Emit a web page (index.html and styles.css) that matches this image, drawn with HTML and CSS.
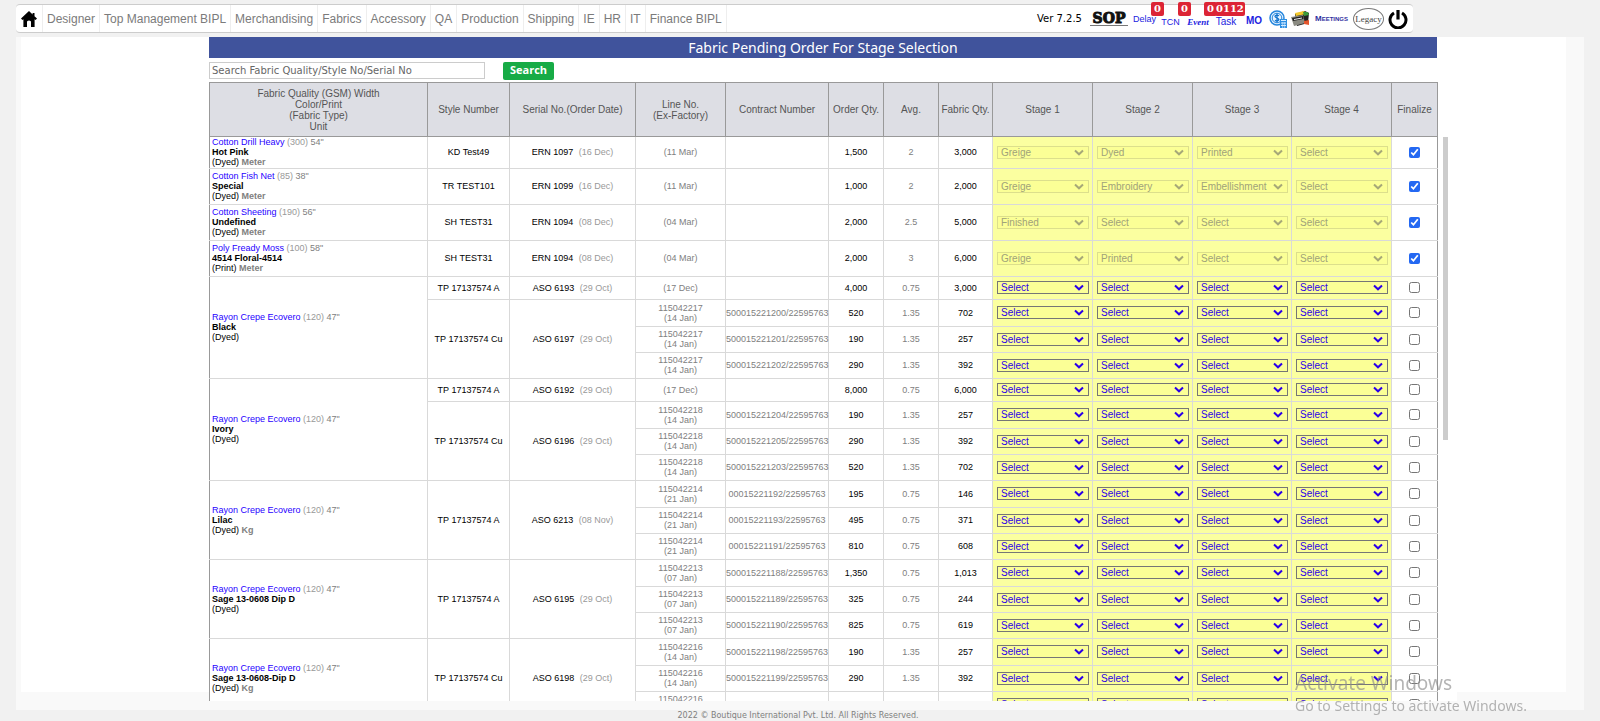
FILE: index.html
```html
<!DOCTYPE html>
<html lang="en">
<head>
<meta charset="utf-8">
<title>Fabric Pending Order For Stage Selection</title>
<link rel="stylesheet" href="styles.css">
</head>
<body>
<header class="topbar">
  <nav class="menu" aria-label="Main">
    <a href="#" class="home" aria-label="Home"><svg width="16" height="16" viewBox="0 0 16 16"><path d="M8 0 0 7.6 1.4 9 2.4 8.2V16H6V10.500Q8 8.500 10 10.500V16H13.600V8.200L14.600 9 16 7.600 13.500 5.200V2H11.600V3.400Z"/></svg></a>
    <a href="#">Designer</a>
    <a href="#">Top Management BIPL</a>
    <a href="#">Merchandising</a>
    <a href="#">Fabrics</a>
    <a href="#">Accessory</a>
    <a href="#">QA</a>
    <a href="#">Production</a>
    <a href="#">Shipping</a>
    <a href="#">IE</a>
    <a href="#">HR</a>
    <a href="#">IT</a>
    <a href="#">Finance BIPL</a>
  </nav>
  <div class="tools">
    <span class="version">Ver 7.2.5</span>
    <a href="#" class="tool sop"><span>SOP</span></a>
    <a href="#" class="tool delay">Delay<span class="badge">0</span></a>
    <a href="#" class="tool tcn">TCN<span class="badge">0</span></a>
    <a href="#" class="tool event">Event<span class="badge">0</span></a>
    <a href="#" class="tool task">Task<span class="badge">0112</span></a>
    <a href="#" class="tool mo">MO</a>
    <a href="#" class="tool costing" aria-label="Costing"><svg width="19" height="18" viewBox="0 0 19 18"><circle cx="8" cy="8" r="7" fill="#e6f3ff" stroke="#2586dc" stroke-width="1.500"/><circle cx="8" cy="8" r="4.800" fill="none" stroke="#2586dc"/><path d="M10 5.800Q8 4.500 6.500 5.600T8 8 9.300 10.400 6 10.200M8 3.600V12.400" fill="none" stroke="#1173cc" stroke-width="1.300"/><rect x="11" y="9" width="7" height="9" fill="#2d8fe2"/><path d="M12 10.500H17M12 13H17M12 15.500H17" stroke="#d8edff"/><path d="M13.700 12V18M15.700 12V18" stroke="#d8edff" stroke-width=".6"/></svg></a>
    <a href="#" class="tool ledger" aria-label="Ledger"><svg width="19" height="16" viewBox="0 0 19 16"><path d="M4 3 14 0 18 2 17 12 6 15Z" fill="#222"/><path d="M4 2 13 0 15 3 5 5Z" fill="#f5c92b"/><path d="M12 1 17 1 18 4 13 5Z" fill="#3c9a3b"/><path d="M0 6 12 4 14 12 3 15Z" fill="#8b8b82"/><path d="M1 7 12 5 12.500 8 2 10Z" fill="#222"/><path d="M3 8.500 11 7" stroke="#eee"/><path d="M13 10 18 9V14L13 13Z" fill="#e3562d"/></svg></a>
    <a href="#" class="tool meetings">Meetings</a>
    <a href="#" class="tool legacy"><span>Legacy</span></a>
    <button type="button" class="tool power" aria-label="Log out"><svg width="20" height="20" viewBox="0 0 20 20"><path d="M6 4A8 8 0 1 0 14 4" fill="none" stroke="#000" stroke-width="3"/><path d="M10 1V10.500" stroke="#000" stroke-width="3.200"/></svg></button>
  </div>
</header>

<main class="content">
  <div class="sheet">
    <section class="module">
      <h1>Fabric Pending Order For Stage Selection</h1>
      <form class="search">
        <input type="text" aria-label="Search orders" placeholder="Search Fabric Quality/Style No/Serial No">
        <button type="button">Search</button>
      </form>
      <table class="grid grid-head">
        <colgroup><col class="c-fabric"><col class="c-style"><col class="c-serial"><col class="c-line"><col class="c-contract"><col class="c-qty"><col class="c-qty"><col class="c-total"><col class="c-stage"><col class="c-stage"><col class="c-stage3"><col class="c-stage"><col class="c-final"></colgroup>
        <thead>
          <tr>
            <th>Fabric Quality (GSM) Width<br>Color/Print<br>(Fabric Type)<br>Unit</th>
            <th>Style Number</th>
            <th>Serial No.(Order Date)</th>
            <th>Line No.<br>(Ex-Factory)</th>
            <th>Contract Number</th>
            <th>Order Qty.</th>
            <th>Avg.</th>
            <th>Fabric Qty.</th>
            <th>Stage 1</th>
            <th>Stage 2</th>
            <th>Stage 3</th>
            <th>Stage 4</th>
            <th>Finalize</th>
          </tr>
        </thead>
      </table>
      <div class="scroller">
        <div class="viewport">
          <table class="grid grid-body" aria-label="Pending fabric orders">
            <colgroup><col class="c-fabric"><col class="c-style"><col class="c-serial"><col class="c-line"><col class="c-contract"><col class="c-qty"><col class="c-qty"><col class="c-total"><col class="c-stage"><col class="c-stage"><col class="c-stage3"><col class="c-stage"><col class="c-final"></colgroup>
            <tbody id="orders"></tbody>
          </table>
        </div>
        <div class="thumb"></div>
      </div>
    </section>
  </div>
</main>
<footer class="footer">2022 © Boutique International Pvt. Ltd. All Rights Reserved.</footer>
<aside class="watermark"><strong>Activate Windows</strong><span>Go to Settings to activate Windows.</span></aside>
<script src="orders.js"></script>
</body>
</html>
```

FILE: styles.css
```css
* { box-sizing: border-box; }

body {
  margin: 0;
  height: 100vh;
  overflow: hidden;
  background: #f1f1f1;
  font-family: "Liberation Sans", Arial, sans-serif;
}

a { text-decoration: none; }

/* Top bar */
.topbar {
  display: flex;
  justify-content: space-between;
  height: 29px;
  margin: 4px 187px 4px 16px;
  background: #fff;
  border: 1px solid #ccc;
  border-width: 1px 0;
  border-radius: 4px;
}

.menu { display: flex; }

.menu a {
  display: flex;
  align-items: center;
  padding: 0 4px;
  border-right: 1px solid #eee;
  color: #7b7b7b;
  font-size: 12px;
}

.menu .home { padding: 0 5px; }

.tools {
  display: flex;
  align-items: center;
  padding-right: 3px;
}

.version {
  width: 49px;
  font: 10px "DejaVu Sans", Verdana, sans-serif;
  white-space: nowrap;
}

.tool {
  position: relative;
  display: flex;
  align-items: center;
  justify-content: center;
  height: 27px;
  padding: 0;
  border: 0;
  background: none;
  color: #2222e0;
  font: 10px "Liberation Sans", Arial, sans-serif;
}

.sop { width: 46px; }
.sop span {
  padding: 0 3px;
  border-bottom: 1px solid #777;
  color: #111;
  font: bold 14px/13px "DejaVu Serif", serif;
  -webkit-text-stroke: 1px #111;
}
.delay { width: 25px; font-size: 9px; }
.tcn { width: 27px; padding-top: 6px; font-size: 9px; }
.event { width: 28px; padding-top: 6px; font: italic bold 9px "Liberation Serif", serif; }
.task { width: 28px; padding-top: 6px; }
.mo { width: 28px; padding-top: 4px; font-size: 10px; font-weight: bold; }
.costing { width: 21px; }
.ledger { width: 22px; }
.meetings { width: 41px; font: bold 8px "Liberation Sans", sans-serif; font-variant: small-caps; color: #3030a0; }
.legacy { width: 33px; }
.legacy span {
  width: 31px;
  border: 1px solid #777;
  border-radius: 50%;
  color: #444;
  font: 9px/20px "Liberation Serif", serif;
  text-align: center;
}
.power { width: 25px; }

.badge {
  position: absolute;
  top: -3px;
  left: 19px;
  padding: 0 3px;
  border-radius: 2px;
  background: #dc2435;
  color: #fff;
  font: bold 10px/14px "DejaVu Serif", serif;
}
.tcn .badge { left: 21px; }
.event .badge { left: 20px; }
.task .badge { left: 3px; padding: 0 1px; }

/* Page body */
.content {
  height: calc(100vh - 48px);
  margin: 0 16px;
  padding: 0 18px 0 5px;
  background: #f9f9f9;
}

.sheet {
  height: calc(100vh - 66px);
  padding: 0 109px 0 188px;
  background: #fff;
}

.module { background: #fff; }

h1 {
  margin: 0 20px 0 0;
  background: #40539c;
  color: #fff;
  font: 14px/21px "Noto Sans", "Open Sans", sans-serif;
  text-align: center;
}

.search {
  display: flex;
  gap: 18px;
  padding: 4px 0 2px;
}

.search input {
  width: 276px;
  height: 17px;
  padding: 0 2px;
  border: 1px solid #ccc;
  font: 10px "DejaVu Sans", Verdana, sans-serif;
}

.search input::placeholder { color: #666; }

.search button {
  width: 51px;
  height: 18px;
  padding: 0 0 2px;
  border: 0;
  border-radius: 2px;
  background: #17ab46;
  color: #fff;
  font: bold 11px/16px "Open Sans", sans-serif;
}

/* Order grid */
.grid {
  width: 100%;
  border-collapse: collapse;
  table-layout: fixed;
}

.c-fabric { width: 218px; }
.c-style { width: 82px; }
.c-serial { width: 126px; }
.c-line { width: 90px; }
.c-contract { width: 103px; }
.c-qty { width: 55px; }
.c-total { width: 54px; }
.c-stage { width: 100px; }
.c-stage3 { width: 99px; }
.c-final { width: 46px; }

.grid-head { width: calc(100% - 19px); }

.grid th {
  height: 54px;
  padding: 0;
  border: 1px solid #999;
  background: #dddee4;
  color: #555;
  font-size: 10px;
  font-weight: normal;
  line-height: 11px;
}

.scroller {
  display: flex;
  gap: 5px;
  margin-right: 9px;
  background: #fff;
}

.viewport {
  flex: 1;
  height: calc(100vh - 157px);
  overflow: hidden;
}

.thumb {
  width: 5px;
  height: 303px;
  background: #ccc;
}

.grid-body {
  border: 1px solid #999;
  border-top: 0;
}

.grid td {
  padding: 0;
  border: 1px solid #d9d9d9;
  border-top: 0;
  color: #808080;
  font-size: 9px;
  line-height: 10px;
  text-align: center;
  white-space: nowrap;
}

.grid td:first-child.fabric { border-left-color: #999; }
.grid td:last-child { border-right-color: #999; }

.grid tr.first { height: 31px; }
.grid tr.single { height: 36px; }
.grid tr.short { height: 23px; }
.grid tr.lead { height: 27px; }
.grid tr.next { height: 26px; }

.grid td.fabric {
  padding-left: 2px;
  text-align: left;
}

.fabric a { color: #1f00ff; }
.fabric .gsm { color: #999; }
.fabric .type, .fabric .color, .grid td.dark, .serial { color: #000; }
.serial { margin-right: 3px; }
.date { color: #999; }
.grid td.qty { font-weight: normal; color: #000; }
.grid td.stage { background: #fbffa0; }

.stage select {
  display: block;
  appearance: none;
  width: calc(100% - 7px);
  height: 13px;
  margin: 0 3px 0 4px;
  padding: 0 16px 0 3px;
  border: 1px solid #767676;
  border-radius: 0;
  background: #fbff96 url("data:image/svg+xml,%3Csvg xmlns='http://www.w3.org/2000/svg' width='10' height='7'%3E%3Cpath d='M1 1.500 5 5.300 9 1.500' fill='none' stroke='%232b00e8' stroke-width='2'/%3E%3C/svg%3E") no-repeat right 4px top 2px;
  color: #2b00e8;
  font: 10px/11px "Liberation Sans", Arial, sans-serif;
}

.stage select:disabled {
  border-color: #dcdf8c;
  background-image: url("data:image/svg+xml,%3Csvg xmlns='http://www.w3.org/2000/svg' width='10' height='7'%3E%3Cpath d='M1 1.500 5 5.300 9 1.500' fill='none' stroke='%23a6a878' stroke-width='2'/%3E%3C/svg%3E");
  color: #a0a27a;
  opacity: 1;
}

.grid input {
  display: block;
  width: 11px;
  height: 11px;
  margin: 0 auto;
  accent-color: #2468f2;
}

.footer {
  padding-right: 4px;
  color: #808080;
  font: 8px/11px "DejaVu Sans", Verdana, sans-serif;
  text-align: center;
}

.watermark {
  position: fixed;
  right: 68px;
  bottom: 6px;
  display: flex;
  flex-direction: column;
  width: 237px;
  color: rgba(140, 140, 140, .65);
  font: 14px/19px "Noto Sans", "Open Sans", sans-serif;
  white-space: nowrap;
  pointer-events: none;
}

.watermark strong {
  font-size: 19px;
  font-weight: normal;
  line-height: 25px;
}
```

FILE: orders.js
```js
// Each fabric holds style orders; each order holds its delivery lines:
// [line no, ex-factory, contract, order qty, avg, fabric qty]
const fabrics = [
  { name: 'Cotton Drill Heavy', gsm: 300, width: 54, color: 'Hot Pink', type: 'Dyed', unit: 'Meter', stages: ['Greige', 'Dyed', 'Printed', 'Select'],
    orders: [{ style: 'KD Test49', serial: 'ERN 1097', date: '16 Dec', lines: [['', '11 Mar', '', '1,500', '2', '3,000']] }] },
  { name: 'Cotton Fish Net', gsm: 85, width: 38, color: 'Special', type: 'Dyed', unit: 'Meter', stages: ['Greige', 'Embroidery', 'Embellishment', 'Select'],
    orders: [{ style: 'TR TEST101', serial: 'ERN 1099', date: '16 Dec', lines: [['', '11 Mar', '', '1,000', '2', '2,000']] }] },
  { name: 'Cotton Sheeting', gsm: 190, width: 56, color: 'Undefined', type: 'Dyed', unit: 'Meter', stages: ['Finished', 'Select', 'Select', 'Select'],
    orders: [{ style: 'SH TEST31', serial: 'ERN 1094', date: '08 Dec', lines: [['', '04 Mar', '', '2,000', '2.5', '5,000']] }] },
  { name: 'Poly Fready Moss', gsm: 100, width: 58, color: '4514 Floral-4514', type: 'Print', unit: 'Meter', stages: ['Greige', 'Printed', 'Select', 'Select'],
    orders: [{ style: 'SH TEST31', serial: 'ERN 1094', date: '08 Dec', lines: [['', '04 Mar', '', '2,000', '3', '6,000']] }] },
  { name: 'Rayon Crepe Ecovero', gsm: 120, width: 47, color: 'Black', type: 'Dyed', unit: '',
    orders: [
      { style: 'TP 17137574 A', serial: 'ASO 6193', date: '29 Oct', lines: [['', '17 Dec', '', '4,000', '0.75', '3,000']] },
      { style: 'TP 17137574 Cu', serial: 'ASO 6197', date: '29 Oct', lines: [
        ['115042217', '14 Jan', '500015221200/22595763', '520', '1.35', '702'],
        ['115042217', '14 Jan', '500015221201/22595763', '190', '1.35', '257'],
        ['115042217', '14 Jan', '500015221202/22595763', '290', '1.35', '392']] }] },
  { name: 'Rayon Crepe Ecovero', gsm: 120, width: 47, color: 'Ivory', type: 'Dyed', unit: '',
    orders: [
      { style: 'TP 17137574 A', serial: 'ASO 6192', date: '29 Oct', lines: [['', '17 Dec', '', '8,000', '0.75', '6,000']] },
      { style: 'TP 17137574 Cu', serial: 'ASO 6196', date: '29 Oct', lines: [
        ['115042218', '14 Jan', '500015221204/22595763', '190', '1.35', '257'],
        ['115042218', '14 Jan', '500015221205/22595763', '290', '1.35', '392'],
        ['115042218', '14 Jan', '500015221203/22595763', '520', '1.35', '702']] }] },
  { name: 'Rayon Crepe Ecovero', gsm: 120, width: 47, color: 'Lilac', type: 'Dyed', unit: 'Kg',
    orders: [{ style: 'TP 17137574 A', serial: 'ASO 6213', date: '08 Nov', lines: [
      ['115042214', '21 Jan', '00015221192/22595763', '195', '0.75', '146'],
      ['115042214', '21 Jan', '00015221193/22595763', '495', '0.75', '371'],
      ['115042214', '21 Jan', '00015221191/22595763', '810', '0.75', '608']] }] },
  { name: 'Rayon Crepe Ecovero', gsm: 120, width: 47, color: 'Sage 13-0608 Dip D', type: 'Dyed', unit: '',
    orders: [{ style: 'TP 17137574 A', serial: 'ASO 6195', date: '29 Oct', lines: [
      ['115042213', '07 Jan', '500015221188/22595763', '1,350', '0.75', '1,013'],
      ['115042213', '07 Jan', '500015221189/22595763', '325', '0.75', '244'],
      ['115042213', '07 Jan', '500015221190/22595763', '825', '0.75', '619']] }] },
  { name: 'Rayon Crepe Ecovero', gsm: 120, width: 47, color: 'Sage 13-0608-Dip D', type: 'Dyed', unit: 'Kg',
    orders: [{ style: 'TP 17137574 Cu', serial: 'ASO 6198', date: '29 Oct', lines: [
      ['115042216', '14 Jan', '500015221198/22595763', '190', '1.35', '257'],
      ['115042216', '14 Jan', '500015221199/22595763', '290', '1.35', '392'],
      ['115042216', '14 Jan', '', '', '', '']] }] }
];

let html = '';
fabrics.forEach((f, fi) => {
  const total = f.orders.reduce((n, o) => n + o.lines.length, 0);
  f.orders.forEach((o, oi) => {
    o.lines.forEach((l, li) => {
      const kind = f.stages ? (fi === 0 ? 'first' : 'single') : o.lines.length === 1 ? 'short' : li === 0 ? 'lead' : 'next';
      html += `<tr class="${kind}">`;
      if (oi === 0 && li === 0) {
        html += `<td class="fabric" rowspan="${total}"><a href="#">${f.name}</a> <span class="gsm">(${f.gsm})</span> ${f.width}"<br><b class="color">${f.color}</b><br><span class="type">(${f.type})</span> <b>${f.unit}</b></td>`;
      }
      if (li === 0) {
        html += `<td class="dark" rowspan="${o.lines.length}">${o.style}</td>`;
        html += `<td rowspan="${o.lines.length}"><span class="serial">${o.serial}</span> <span class="date">(${o.date})</span></td>`;
      }
      html += `<td>${l[0] ? l[0] + '<br>' : ''}(${l[1]})</td><td>${l[2]}</td><td class="qty">${l[3]}</td><td>${l[4]}</td><td class="qty">${l[5]}</td>`;
      for (let s = 0; s < 4; s++) {
        const value = f.stages ? f.stages[s] : 'Select';
        html += `<td class="stage"><select aria-label="Stage ${s + 1}"${f.stages ? ' disabled' : ''}><option>${value}</option></select></td>`;
      }
      html += `<td><input type="checkbox" aria-label="Finalize"${f.stages ? ' checked' : ''}></td></tr>`;
    });
  });
});
document.getElementById('orders').innerHTML = html;
```
